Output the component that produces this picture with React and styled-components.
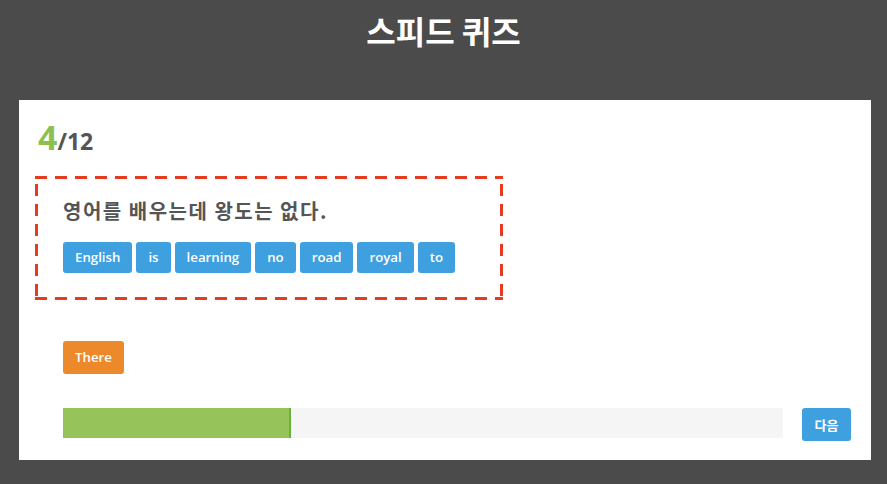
import React from "react";
import styled, { createGlobalStyle } from "styled-components";

const Global = createGlobalStyle`
  html, body { margin: 0; padding: 0; background: #4b4b4b; }
  body { font-family: "Open Sans", "Noto Sans CJK KR", sans-serif; }
  * { box-sizing: border-box; }
`;

const Page = styled.div`
  width: 887px;
  height: 484px;
  overflow: hidden;
  background: #4b4b4b;
`;

const Header = styled.header`
  height: 100px;
  padding-top: 8px;
  text-align: center;
`;

const Title = styled.h1`
  margin: 0;
  font-family: "Noto Sans CJK KR", sans-serif;
  font-size: 32px;
  font-weight: 700;
  line-height: 44px;
  color: #ffffff;
`;

const Card = styled.section`
  margin: 0 16px 0 19px;
  height: 360px;
  background: #ffffff;
  padding: 20px 20px 19px 16px;
  display: flex;
  flex-direction: column;
`;

const Count = styled.div`
  padding-left: 3px;
  line-height: 34px;
  height: 34px;
  font-weight: 700;
  color: #555555;
`;

const Current = styled.span`
  font-size: 34px;
  color: #8cc152;
`;

const Total = styled.span`
  font-size: 23px;
`;

const dash = "#e63b1f";

const QuestionBox = styled.div`
  margin-top: 22px;
  width: 468px;
  height: 124px;
  padding: 21px 28px 0 28px;
  background:
    repeating-linear-gradient(90deg, ${dash} 0 12px, transparent 12px 20px) left top / 100% 3px no-repeat,
    repeating-linear-gradient(90deg, ${dash} 0 12px, transparent 12px 20px) left bottom / 100% 3px no-repeat,
    repeating-linear-gradient(180deg, transparent 0 8px, ${dash} 8px 20px) left top / 3px 100% no-repeat,
    repeating-linear-gradient(180deg, transparent 0 8px, ${dash} 8px 20px) right top / 3px 100% no-repeat;
`;

const Sentence = styled.p`
  margin: 0 0 17px;
  font-family: "Noto Sans CJK KR", sans-serif;
  font-size: 20px;
  letter-spacing: 1.5px;
  line-height: 28px;
  font-weight: 700;
  color: #555555;
`;

const Words = styled.div`
  display: flex;
  gap: 4px;
`;

const Chip = styled.button`
  height: ${(p) => p.$h || 31}px;
  padding: 0 12px;
  border: none;
  border-radius: 3px;
  background: ${(p) => p.$color};
  color: #ffffff;
  font-family: "Open Sans", "Noto Sans CJK KR", sans-serif;
  font-size: 13.25px;
  font-weight: 600;
  line-height: ${(p) => p.$h || 31}px;
  cursor: pointer;
`;

const Lower = styled.div`
  padding-left: 28px;
  display: flex;
  flex-direction: column;
`;

const AnswerRow = styled.div`
  margin-top: 41px;
  display: flex;
  height: 33px;
`;

const ProgressRow = styled.div`
  margin-top: 34px;
  display: flex;
  align-items: flex-start;
  gap: 19px;
`;

const Track = styled.div`
  flex: 1;
  height: 30px;
  background: #f5f5f5;
  display: flex;
`;

const Fill = styled.div`
  height: 100%;
  background: #97c45a;
  border-right: 2px solid #66b33a;
`;

const NextButton = styled(Chip)`
  width: 49px;
  padding: 0;
  font-family: "Noto Sans CJK KR", sans-serif;
  font-size: 13px;
  font-weight: 700;
`;

const words = ["English", "is", "learning", "no", "road", "royal", "to"];

export default function App() {
  return (
    <Page>
      <Global />
      <Header>
        <Title>스피드 퀴즈</Title>
      </Header>
      <Card>
        <Count>
          <Current>4</Current>
          <Total>/12</Total>
        </Count>
        <QuestionBox>
          <Sentence>영어를 배우는데 왕도는 없다.</Sentence>
          <Words>
            {words.map((w) => (
              <Chip key={w} $color="#3fa0e0">
                {w}
              </Chip>
            ))}
          </Words>
        </QuestionBox>
        <Lower>
          <AnswerRow>
            <Chip $color="#ec8a2b" $h={33}>There</Chip>
          </AnswerRow>
          <ProgressRow>
            <Track>
              <Fill style={{ width: `${(4 / 12) * 100 - 1.6}%` }} />
            </Track>
            <NextButton $color="#3fa0e0" $h={33}>다음</NextButton>
          </ProgressRow>
        </Lower>
      </Card>
    </Page>
  );
}
